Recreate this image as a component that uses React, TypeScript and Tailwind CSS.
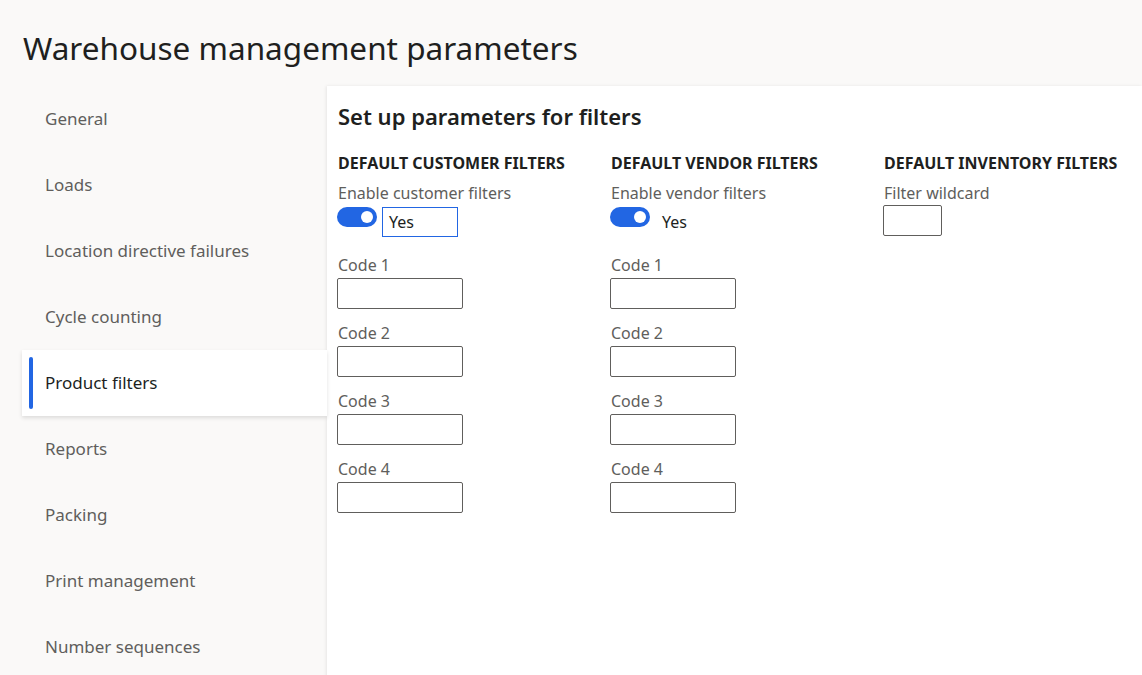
const navItems = [
  "General",
  "Loads",
  "Location directive failures",
  "Cycle counting",
  "Product filters",
  "Reports",
  "Packing",
  "Print management",
  "Number sequences",
];

const codes = ["Code 1", "Code 2", "Code 3", "Code 4"];

const Toggle = () => (
  <div className="relative ml-[-1px] h-5 w-10 rounded-full bg-[#2266e3]">
    <div className="absolute right-[4px] top-[4px] h-3 w-3 rounded-full bg-white" />
  </div>
);

const CodeFields = () => (
  <div className="mt-[17px] flex flex-col gap-[5px]">
    {codes.map((c) => (
      <div key={c} className="flex flex-col">
        <label className="text-[16px] leading-[22px] text-[#605e5c]">{c}</label>
        <div className="mt-[2px] mb-[8px] ml-[-1px] h-[31px] w-[126px] rounded-[2px] border border-[#605e5c] bg-white" />
      </div>
    ))}
  </div>
);

const SectionHeader = ({ children }: { children: string }) => (
  <h3 className="text-[16px] font-bold leading-[22px] text-[#201f1e]">{children}</h3>
);

export default function App() {
  return (
    <div
      className="flex h-[675px] w-[1142px] flex-col overflow-hidden bg-[#faf9f8]"
      style={{ fontFamily: '"Noto Sans", "Open Sans", sans-serif' }}
    >
      <header className="h-[86px] shrink-0 pl-[23px] pt-[28px]">
        <h1 className="text-[31.5px] leading-[40px] text-[#201f1e]">
          Warehouse management parameters
        </h1>
      </header>

      <div className="flex flex-1">
        <nav className="ml-[22px] flex w-[305px] shrink-0 flex-col">
          {navItems.map((item) => {
            const active = item === "Product filters";
            return (
              <div
                key={item}
                className={
                  active
                    ? "relative z-10 flex h-[66px] items-center bg-white pl-[23px] text-[17px] text-[#201f1e] shadow-[0_2px_4px_rgba(0,0,0,0.12)]"
                    : "flex h-[66px] items-center pl-[23px] text-[17px] text-[#605e5c]"
                }
              >
                {active && (
                  <span className="absolute left-[7px] top-[7px] h-[52px] w-[4px] rounded-full bg-[#2266e3]" />
                )}
                {item}
              </div>
            );
          })}
        </nav>

        <main className="flex-1 bg-white pl-[11px] pt-[15px] shadow-[-1px_0_3px_rgba(0,0,0,0.08)]">
          <h2 className="text-[22px] font-semibold leading-[30px] text-[#201f1e]">
            Set up parameters for filters
          </h2>

          <div className="mt-[21px] grid grid-cols-[273px_273px_1fr]">
            <div className="flex flex-col">
              <SectionHeader>DEFAULT CUSTOMER FILTERS</SectionHeader>
              <span className="mt-[8px] text-[16px] leading-[22px] text-[#605e5c]">
                Enable customer filters
              </span>
              <div className="mt-[3px] flex items-start gap-[5px]">
                <Toggle />
                <div className="flex h-[30px] w-[76px] items-center border border-[#2266e3] pl-[6px] text-[16px] text-[#201f1e]">
                  Yes
                </div>
              </div>
              <CodeFields />
            </div>

            <div className="flex flex-col">
              <SectionHeader>DEFAULT VENDOR FILTERS</SectionHeader>
              <span className="mt-[8px] text-[16px] leading-[22px] text-[#605e5c]">
                Enable vendor filters
              </span>
              <div className="mt-[3px] flex h-[30px] items-start gap-[12px]">
                <Toggle />
                <span className="mt-[4px] text-[16px] leading-[22px] text-[#201f1e]">Yes</span>
              </div>
              <CodeFields />
            </div>

            <div className="flex flex-col">
              <SectionHeader>DEFAULT INVENTORY FILTERS</SectionHeader>
              <span className="mt-[8px] text-[16px] leading-[22px] text-[#605e5c]">
                Filter wildcard
              </span>
              <div className="mt-[1px] ml-[-1px] h-[31px] w-[59px] rounded-[2px] border border-[#605e5c] bg-white" />
            </div>
          </div>
        </main>
      </div>
    </div>
  );
}
